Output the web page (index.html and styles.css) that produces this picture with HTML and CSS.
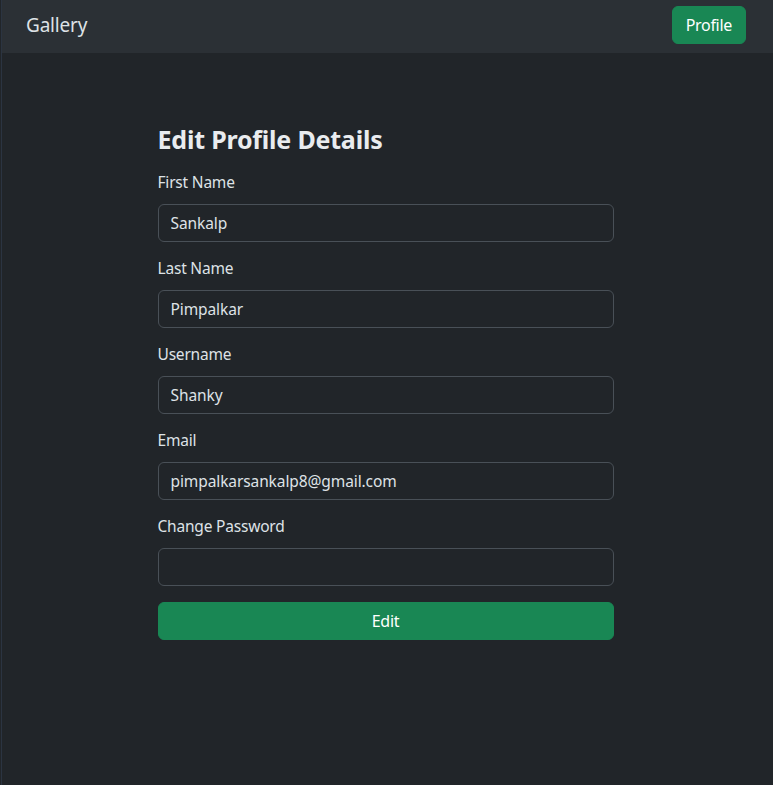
FILE: index.html
```html
<!DOCTYPE html>
<html lang="en">
<head>
<meta charset="utf-8">
<title>Gallery</title>
<link rel="stylesheet" href="styles.css">
</head>
<body>
<div class="page">
  <nav class="navbar">
    <a class="brand" href="#">Gallery</a>
    <a class="btn btn-nav" href="#">Profile</a>
  </nav>
  <main class="content">
    <form class="form">
      <h3 class="title">Edit Profile Details</h3>
      <div class="field">
        <label class="label">First Name</label>
        <input class="input" type="text" value="Sankalp">
      </div>
      <div class="field">
        <label class="label">Last Name</label>
        <input class="input" type="text" value="Pimpalkar">
      </div>
      <div class="field">
        <label class="label">Username</label>
        <input class="input" type="text" value="Shanky">
      </div>
      <div class="field">
        <label class="label">Email</label>
        <input class="input" type="text" value="pimpalkarsankalp8@gmail.com">
      </div>
      <div class="field">
        <label class="label">Change Password</label>
        <input class="input" type="password" value="">
      </div>
      <button class="btn btn-submit" type="button">Edit</button>
    </form>
  </main>
</div>
</body>
</html>
```

FILE: styles.css
```css
* { box-sizing: border-box; }
html, body {
  margin: 0;
  height: 100%;
}
body {
  background: #212529;
  color: #dee2e6;
  font-family: "Noto Sans", "Open Sans", sans-serif;
  font-size: 16px;
  line-height: 1.5;
}
.page {
  min-height: 100%;
  border-left: 1px solid #2b3441;
  margin-left: 1px;
}
.navbar {
  display: flex;
  align-items: center;
  justify-content: space-between;
  height: 53px;
  background: #2b3035;
  padding: 0 27px 0 24px;
}
.brand {
  color: #dee2e6;
  text-decoration: none;
  font-size: 19px;
  letter-spacing: -0.2px;
  padding-bottom: 2px;
}
.btn {
  display: inline-flex;
  align-items: center;
  justify-content: center;
  background: #198754;
  color: #fff;
  border: 1px solid #198754;
  border-radius: 6px;
  font-family: inherit;
  font-size: 16px;
  text-decoration: none;
  letter-spacing: -0.3px;
}
.btn-nav {
  height: 38px;
  padding: 0 13px;
  margin-bottom: 3px;
}
.content {
  display: flex;
  justify-content: center;
  padding-top: 71px;
  padding-right: 4px;
}
.form {
  width: 456px;
  display: flex;
  flex-direction: column;
}
.title {
  margin: 0 0 16px;
  font-size: 25px;
  font-weight: 700;
  line-height: 1.2;
  letter-spacing: -0.2px;
  color: #e9ecef;
}
.field {
  display: flex;
  flex-direction: column;
  margin-bottom: 14px;
}
.label {
  line-height: 24px;
  margin-bottom: 10px;
  font-size: 15.5px;
  letter-spacing: -0.2px;
}
.input {
  height: 38px;
  padding: 0 12px 1px;
  background: #212529;
  color: #dee2e6;
  border: 1px solid #495057;
  border-radius: 6px;
  font-family: inherit;
  font-size: 15.5px;
  letter-spacing: -0.1px;
  outline: none;
}
.btn-submit {
  height: 38px;
  width: 100%;
  cursor: pointer;
  margin-top: 2px;
}
```
